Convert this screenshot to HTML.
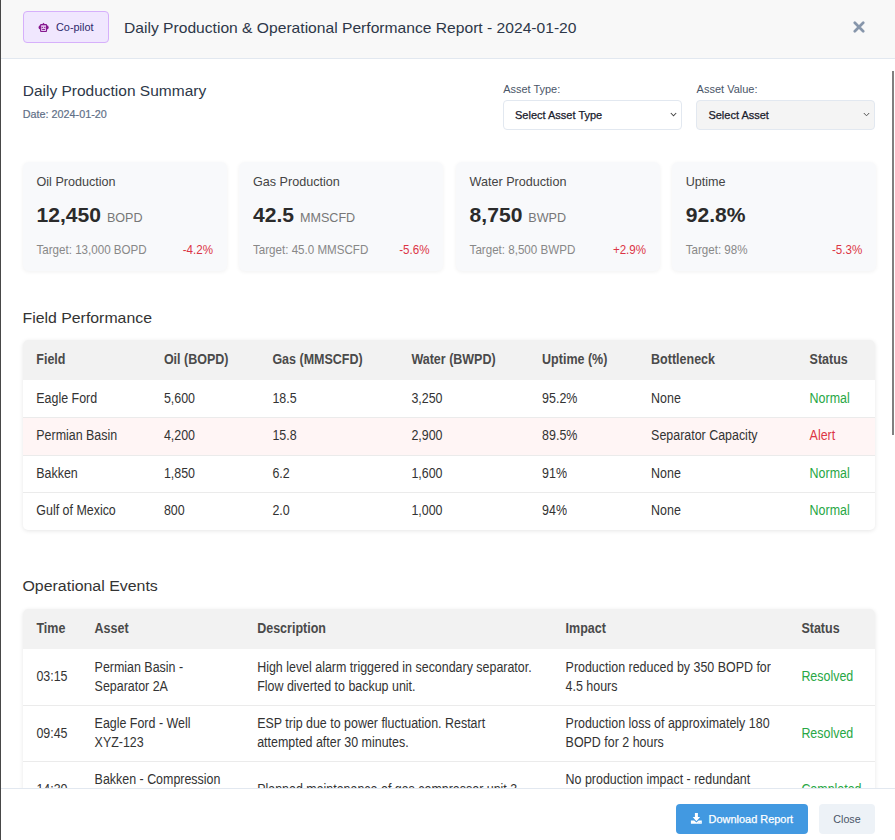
<!DOCTYPE html>
<html><head><meta charset="utf-8"><style>
*{box-sizing:border-box;margin:0;padding:0}
html,body{width:895px;height:840px;overflow:hidden;background:#fff;font-family:"Liberation Sans",sans-serif}
#wrap{position:absolute;left:0;top:0;width:895px;height:840px;background:#fff;overflow:hidden}
.t{position:absolute;white-space:nowrap;line-height:1}
#lb{position:absolute;left:0;top:0;width:1px;height:840px;background:#474747}
#hdr{position:absolute;left:1px;top:0;width:894px;height:59px;background:#f8f8f8;border-bottom:1px solid #e2e8f0}
#copilot{position:absolute;left:23px;top:11px;width:86px;height:32px;background:#f0e7fe;border:1px solid #d6b0fb;border-radius:4px}
.sel{position:absolute;height:29.5px;border:1px solid #e2e8f0;border-radius:4px}
.card{position:absolute;top:162px;width:204px;height:109px;background:#f8f9fb;border-radius:6px;box-shadow:0 1px 4px rgba(0,0,0,0.06)}
.tbl{position:absolute;left:23px;width:852px;background:#fff;border-radius:5px;box-shadow:0 1px 4px rgba(0,0,0,0.10)}
#foot{position:absolute;left:1px;top:788px;width:894px;height:52px;background:#fff;border-top:1px solid #e2e8f0}
#sb{position:absolute;left:892px;top:71px;width:2px;height:364px;background:#808080}
</style></head><body><div id="wrap">
<div id="hdr"></div>
<div id="copilot"></div>
<svg style="position:absolute;left:34px;top:18px" width="20" height="18" viewBox="34 18 20 18"><path d="M40.4 27.4a1.9 1.9 0 0 0 0 0M40.6 25.3a2.1 2.1 0 0 0 0 4.2z" fill="#86198f"/><path d="M46.6 25.3a2.1 2.1 0 0 1 0 4.2z" fill="#86198f"/><path d="M41.9 24.6L43.5 22.8L45.1 24.6z" fill="#86198f"/><rect x="40.6" y="24.6" width="5.9" height="6.9" rx="0.5" fill="#e2c6ee" stroke="#86198f" stroke-width="1.1"/><circle cx="42.3" cy="27.4" r="0.6" fill="#86198f"/><circle cx="44.8" cy="27.4" r="0.6" fill="#86198f"/><rect x="42.1" y="29.1" width="2.9" height="0.9" fill="#86198f"/></svg>
<div class="t" style="left:56.00px;top:21.77px;font-size:10.9px;color:#2e2a6b;">Co-pilot</div>

<div class="t" style="left:124.00px;top:19.76px;font-size:15.64px;color:#2d3748;transform:scaleY(0.96);transform-origin:0 13.24px;">Daily Production &amp; Operational Performance Report - 2024-01-20</div>

<svg style="position:absolute;left:853px;top:21px" width="12" height="12" viewBox="0 0 12 12"><path d="M1.8 1.8L10.2 10.2M10.2 1.8L1.8 10.2" stroke="#8796ab" stroke-width="2.7" stroke-linecap="round"/></svg>
<div class="t" style="left:22.70px;top:82.98px;font-size:15.5px;color:#2d3748;transform:scaleY(0.96);transform-origin:0 13.12px;">Daily Production Summary</div>

<div class="t" style="left:22.80px;top:108.86px;font-size:10.8px;color:#5f6f87;-webkit-text-stroke:0.2px #5f6f87;">Date: 2024-01-20</div>

<div class="t" style="left:503.30px;top:83.93px;font-size:10.95px;color:#4a5568;">Asset Type:</div>

<div class="sel" style="left:503px;top:100px;width:179px;background:#fff"></div>
<div class="t" style="left:515.00px;top:109.99px;font-size:11.0px;color:#1a202c;-webkit-text-stroke:0.25px #1a202c;">Select Asset Type</div>

<svg style="position:absolute;left:669.5px;top:112px" width="7" height="5" viewBox="0 0 7 5"><path d="M0.8 1L3.5 3.8L6.2 1" stroke="#444" stroke-width="1.05" fill="none"/></svg>
<div class="t" style="left:696.60px;top:83.89px;font-size:11.0px;color:#4a5568;">Asset Value:</div>

<div class="sel" style="left:696px;top:100px;width:179px;background:#f4f4f4"></div>
<div class="t" style="left:708.40px;top:109.99px;font-size:11.0px;color:#1a202c;-webkit-text-stroke:0.25px #1a202c;">Select Asset</div>

<svg style="position:absolute;left:862.5px;top:112px" width="7" height="5" viewBox="0 0 7 5"><path d="M0.8 1L3.5 3.8L6.2 1" stroke="#555" stroke-width="1.0" fill="none"/></svg>
<div class="card" style="left:22.5px"></div>
<div class="t" style="left:36.50px;top:176.33px;font-size:12.6px;color:#444;transform:scaleY(0.96);transform-origin:0 10.67px;">Oil Production</div>

<div class="t" style="left:36.50px;top:204.04px;font-size:21.1px;color:#2b2b2b;font-weight:bold;">12,450 <span style="font-size:12.6px;font-weight:normal;color:#777">BOPD</span></div>

<div class="t" style="left:36.50px;top:244.28px;font-size:11.6px;color:#888;transform:scaleY(1.15);transform-origin:0 9.82px;">Target: 13,000 BOPD</div>

<div class="t" style="right:682.00px;top:244.28px;font-size:11.6px;color:#dc3545;transform:scaleY(1.15);transform-origin:0 9.82px">-4.2%</div>
<div class="card" style="left:239.0px"></div>
<div class="t" style="left:253.00px;top:176.33px;font-size:12.6px;color:#444;transform:scaleY(0.96);transform-origin:0 10.67px;">Gas Production</div>

<div class="t" style="left:253.00px;top:204.04px;font-size:21.1px;color:#2b2b2b;font-weight:bold;">42.5 <span style="font-size:12.6px;font-weight:normal;color:#777">MMSCFD</span></div>

<div class="t" style="left:253.00px;top:244.28px;font-size:11.6px;color:#888;transform:scaleY(1.15);transform-origin:0 9.82px;">Target: 45.0 MMSCFD</div>

<div class="t" style="right:465.50px;top:244.28px;font-size:11.6px;color:#dc3545;transform:scaleY(1.15);transform-origin:0 9.82px">-5.6%</div>
<div class="card" style="left:455.6px"></div>
<div class="t" style="left:469.60px;top:176.33px;font-size:12.6px;color:#444;transform:scaleY(0.96);transform-origin:0 10.67px;">Water Production</div>

<div class="t" style="left:469.60px;top:204.04px;font-size:21.1px;color:#2b2b2b;font-weight:bold;">8,750 <span style="font-size:12.6px;font-weight:normal;color:#777">BWPD</span></div>

<div class="t" style="left:469.60px;top:244.28px;font-size:11.6px;color:#888;transform:scaleY(1.15);transform-origin:0 9.82px;">Target: 8,500 BWPD</div>

<div class="t" style="right:248.90px;top:244.28px;font-size:11.6px;color:#dc3545;transform:scaleY(1.15);transform-origin:0 9.82px">+2.9%</div>
<div class="card" style="left:671.7px"></div>
<div class="t" style="left:685.70px;top:176.33px;font-size:12.6px;color:#444;transform:scaleY(0.96);transform-origin:0 10.67px;">Uptime</div>

<div class="t" style="left:685.70px;top:204.04px;font-size:21.1px;color:#2b2b2b;font-weight:bold;">92.8%</div>

<div class="t" style="left:685.70px;top:244.28px;font-size:11.6px;color:#888;transform:scaleY(1.15);transform-origin:0 9.82px;">Target: 98%</div>

<div class="t" style="right:32.80px;top:244.28px;font-size:11.6px;color:#dc3545;transform:scaleY(1.15);transform-origin:0 9.82px">-5.3%</div>
<div class="t" style="left:22.50px;top:310.08px;font-size:15.85px;color:#333;transform:scaleY(0.96);transform-origin:0 13.42px;">Field Performance</div>

<div class="tbl" style="top:340px;height:190px"></div>
<div style="position:absolute;left:23px;top:340px;width:852px;height:40px;background:#f2f2f2;border-radius:5px 5px 0 0"></div>
<div style="position:absolute;left:23px;top:416.9px;width:852px;height:1px;background:#ebebeb"></div>
<div style="position:absolute;left:23px;top:454.7px;width:852px;height:1px;background:#ebebeb"></div>
<div style="position:absolute;left:23px;top:491.9px;width:852px;height:1px;background:#ebebeb"></div>
<div style="position:absolute;left:23px;top:417.9px;width:852px;height:36.80000000000001px;background:#fff5f5"></div>
<div class="t" style="left:36.30px;top:354.22px;font-size:12.5px;color:#4a4a4a;font-weight:bold;transform:scaleY(1.15);transform-origin:0 10.58px;">Field</div>

<div class="t" style="left:163.90px;top:354.22px;font-size:12.5px;color:#4a4a4a;font-weight:bold;transform:scaleY(1.15);transform-origin:0 10.58px;">Oil (BOPD)</div>

<div class="t" style="left:272.40px;top:354.22px;font-size:12.5px;color:#4a4a4a;font-weight:bold;transform:scaleY(1.15);transform-origin:0 10.58px;">Gas (MMSCFD)</div>

<div class="t" style="left:411.40px;top:354.22px;font-size:12.5px;color:#4a4a4a;font-weight:bold;transform:scaleY(1.15);transform-origin:0 10.58px;">Water (BWPD)</div>

<div class="t" style="left:542.10px;top:354.22px;font-size:12.5px;color:#4a4a4a;font-weight:bold;transform:scaleY(1.15);transform-origin:0 10.58px;">Uptime (%)</div>

<div class="t" style="left:651.10px;top:354.22px;font-size:12.5px;color:#4a4a4a;font-weight:bold;transform:scaleY(1.15);transform-origin:0 10.58px;">Bottleneck</div>

<div class="t" style="left:809.60px;top:354.22px;font-size:12.5px;color:#4a4a4a;font-weight:bold;transform:scaleY(1.15);transform-origin:0 10.58px;">Status</div>

<div class="t" style="left:36.30px;top:392.76px;font-size:12.45px;color:#333;transform:scaleY(1.15);transform-origin:0 10.54px;">Eagle Ford</div>

<div class="t" style="left:163.90px;top:392.76px;font-size:12.45px;color:#333;transform:scaleY(1.15);transform-origin:0 10.54px;">5,600</div>

<div class="t" style="left:272.40px;top:392.76px;font-size:12.45px;color:#333;transform:scaleY(1.15);transform-origin:0 10.54px;">18.5</div>

<div class="t" style="left:411.40px;top:392.76px;font-size:12.45px;color:#333;transform:scaleY(1.15);transform-origin:0 10.54px;">3,250</div>

<div class="t" style="left:542.10px;top:392.76px;font-size:12.45px;color:#333;transform:scaleY(1.15);transform-origin:0 10.54px;">95.2%</div>

<div class="t" style="left:651.10px;top:392.76px;font-size:12.45px;color:#333;transform:scaleY(1.15);transform-origin:0 10.54px;">None</div>

<div class="t" style="left:809.60px;top:392.76px;font-size:12.45px;color:#28a745;transform:scaleY(1.15);transform-origin:0 10.54px;">Normal</div>

<div class="t" style="left:36.30px;top:430.36px;font-size:12.45px;color:#333;transform:scaleY(1.15);transform-origin:0 10.54px;">Permian Basin</div>

<div class="t" style="left:163.90px;top:430.36px;font-size:12.45px;color:#333;transform:scaleY(1.15);transform-origin:0 10.54px;">4,200</div>

<div class="t" style="left:272.40px;top:430.36px;font-size:12.45px;color:#333;transform:scaleY(1.15);transform-origin:0 10.54px;">15.8</div>

<div class="t" style="left:411.40px;top:430.36px;font-size:12.45px;color:#333;transform:scaleY(1.15);transform-origin:0 10.54px;">2,900</div>

<div class="t" style="left:542.10px;top:430.36px;font-size:12.45px;color:#333;transform:scaleY(1.15);transform-origin:0 10.54px;">89.5%</div>

<div class="t" style="left:651.10px;top:430.36px;font-size:12.45px;color:#333;transform:scaleY(1.15);transform-origin:0 10.54px;">Separator Capacity</div>

<div class="t" style="left:809.60px;top:430.36px;font-size:12.45px;color:#dc3545;transform:scaleY(1.15);transform-origin:0 10.54px;">Alert</div>

<div class="t" style="left:36.30px;top:467.86px;font-size:12.45px;color:#333;transform:scaleY(1.15);transform-origin:0 10.54px;">Bakken</div>

<div class="t" style="left:163.90px;top:467.86px;font-size:12.45px;color:#333;transform:scaleY(1.15);transform-origin:0 10.54px;">1,850</div>

<div class="t" style="left:272.40px;top:467.86px;font-size:12.45px;color:#333;transform:scaleY(1.15);transform-origin:0 10.54px;">6.2</div>

<div class="t" style="left:411.40px;top:467.86px;font-size:12.45px;color:#333;transform:scaleY(1.15);transform-origin:0 10.54px;">1,600</div>

<div class="t" style="left:542.10px;top:467.86px;font-size:12.45px;color:#333;transform:scaleY(1.15);transform-origin:0 10.54px;">91%</div>

<div class="t" style="left:651.10px;top:467.86px;font-size:12.45px;color:#333;transform:scaleY(1.15);transform-origin:0 10.54px;">None</div>

<div class="t" style="left:809.60px;top:467.86px;font-size:12.45px;color:#28a745;transform:scaleY(1.15);transform-origin:0 10.54px;">Normal</div>

<div class="t" style="left:36.30px;top:505.36px;font-size:12.45px;color:#333;transform:scaleY(1.15);transform-origin:0 10.54px;">Gulf of Mexico</div>

<div class="t" style="left:163.90px;top:505.36px;font-size:12.45px;color:#333;transform:scaleY(1.15);transform-origin:0 10.54px;">800</div>

<div class="t" style="left:272.40px;top:505.36px;font-size:12.45px;color:#333;transform:scaleY(1.15);transform-origin:0 10.54px;">2.0</div>

<div class="t" style="left:411.40px;top:505.36px;font-size:12.45px;color:#333;transform:scaleY(1.15);transform-origin:0 10.54px;">1,000</div>

<div class="t" style="left:542.10px;top:505.36px;font-size:12.45px;color:#333;transform:scaleY(1.15);transform-origin:0 10.54px;">94%</div>

<div class="t" style="left:651.10px;top:505.36px;font-size:12.45px;color:#333;transform:scaleY(1.15);transform-origin:0 10.54px;">None</div>

<div class="t" style="left:809.60px;top:505.36px;font-size:12.45px;color:#28a745;transform:scaleY(1.15);transform-origin:0 10.54px;">Normal</div>

<div class="t" style="left:22.50px;top:578.32px;font-size:15.92px;color:#333;transform:scaleY(0.96);transform-origin:0 13.48px;">Operational Events</div>

<div class="tbl" style="top:609px;height:300px"></div>
<div style="position:absolute;left:23px;top:609px;width:852px;height:40px;background:#f2f2f2;border-radius:5px 5px 0 0"></div>
<div class="t" style="left:36.40px;top:623.22px;font-size:12.5px;color:#4a4a4a;font-weight:bold;transform:scaleY(1.15);transform-origin:0 10.58px;">Time</div>

<div class="t" style="left:94.60px;top:623.22px;font-size:12.5px;color:#4a4a4a;font-weight:bold;transform:scaleY(1.15);transform-origin:0 10.58px;">Asset</div>

<div class="t" style="left:257.20px;top:623.22px;font-size:12.5px;color:#4a4a4a;font-weight:bold;transform:scaleY(1.15);transform-origin:0 10.58px;">Description</div>

<div class="t" style="left:565.60px;top:623.22px;font-size:12.5px;color:#4a4a4a;font-weight:bold;transform:scaleY(1.15);transform-origin:0 10.58px;">Impact</div>

<div class="t" style="left:801.40px;top:623.22px;font-size:12.5px;color:#4a4a4a;font-weight:bold;transform:scaleY(1.15);transform-origin:0 10.58px;">Status</div>

<div style="position:absolute;left:23px;top:705.0px;width:852px;height:1px;background:#ebebeb"></div>
<div style="position:absolute;left:23px;top:761.0px;width:852px;height:1px;background:#ebebeb"></div>
<div class="t" style="left:36.40px;top:671.31px;font-size:12.45px;color:#333;transform:scaleY(1.15);transform-origin:0 10.54px;">03:15</div>

<div class="t" style="left:94.60px;top:661.91px;font-size:12.45px;color:#333;transform:scaleY(1.15);transform-origin:0 10.54px;">Permian Basin -</div>

<div class="t" style="left:94.60px;top:680.71px;font-size:12.45px;color:#333;transform:scaleY(1.15);transform-origin:0 10.54px;">Separator 2A</div>

<div class="t" style="left:257.20px;top:661.91px;font-size:12.45px;color:#333;transform:scaleY(1.15);transform-origin:0 10.54px;">High level alarm triggered in secondary separator.</div>

<div class="t" style="left:257.20px;top:680.71px;font-size:12.45px;color:#333;transform:scaleY(1.15);transform-origin:0 10.54px;">Flow diverted to backup unit.</div>

<div class="t" style="left:565.60px;top:661.91px;font-size:12.45px;color:#333;transform:scaleY(1.15);transform-origin:0 10.54px;">Production reduced by 350 BOPD for</div>

<div class="t" style="left:565.60px;top:680.71px;font-size:12.45px;color:#333;transform:scaleY(1.15);transform-origin:0 10.54px;">4.5 hours</div>

<div class="t" style="left:801.40px;top:671.31px;font-size:12.45px;color:#28a745;transform:scaleY(1.15);transform-origin:0 10.54px;">Resolved</div>

<div class="t" style="left:36.40px;top:727.56px;font-size:12.45px;color:#333;transform:scaleY(1.15);transform-origin:0 10.54px;">09:45</div>

<div class="t" style="left:94.60px;top:718.16px;font-size:12.45px;color:#333;transform:scaleY(1.15);transform-origin:0 10.54px;">Eagle Ford - Well</div>

<div class="t" style="left:94.60px;top:736.96px;font-size:12.45px;color:#333;transform:scaleY(1.15);transform-origin:0 10.54px;">XYZ-123</div>

<div class="t" style="left:257.20px;top:718.16px;font-size:12.45px;color:#333;transform:scaleY(1.15);transform-origin:0 10.54px;">ESP trip due to power fluctuation. Restart</div>

<div class="t" style="left:257.20px;top:736.96px;font-size:12.45px;color:#333;transform:scaleY(1.15);transform-origin:0 10.54px;">attempted after 30 minutes.</div>

<div class="t" style="left:565.60px;top:718.16px;font-size:12.45px;color:#333;transform:scaleY(1.15);transform-origin:0 10.54px;">Production loss of approximately 180</div>

<div class="t" style="left:565.60px;top:736.96px;font-size:12.45px;color:#333;transform:scaleY(1.15);transform-origin:0 10.54px;">BOPD for 2 hours</div>

<div class="t" style="left:801.40px;top:727.56px;font-size:12.45px;color:#28a745;transform:scaleY(1.15);transform-origin:0 10.54px;">Resolved</div>

<div class="t" style="left:36.40px;top:783.81px;font-size:12.45px;color:#333;transform:scaleY(1.15);transform-origin:0 10.54px;">14:30</div>

<div class="t" style="left:94.60px;top:774.41px;font-size:12.45px;color:#333;transform:scaleY(1.15);transform-origin:0 10.54px;">Bakken - Compression</div>

<div class="t" style="left:94.60px;top:793.21px;font-size:12.45px;color:#333;transform:scaleY(1.15);transform-origin:0 10.54px;">Station</div>

<div class="t" style="left:257.20px;top:783.81px;font-size:12.45px;color:#333;transform:scaleY(1.15);transform-origin:0 10.54px;">Planned maintenance of gas compressor unit 3</div>

<div class="t" style="left:565.60px;top:774.41px;font-size:12.45px;color:#333;transform:scaleY(1.15);transform-origin:0 10.54px;">No production impact - redundant</div>

<div class="t" style="left:565.60px;top:793.21px;font-size:12.45px;color:#333;transform:scaleY(1.15);transform-origin:0 10.54px;">capacity available</div>

<div class="t" style="left:801.40px;top:783.81px;font-size:12.45px;color:#28a745;transform:scaleY(1.15);transform-origin:0 10.54px;">Completed</div>

<div id="foot"></div>
<div style="position:absolute;left:676px;top:804px;width:132px;height:30px;background:#4299e1;border-radius:4px"></div>
<svg style="position:absolute;left:686px;top:808px" width="20" height="20" viewBox="686 808 20 20"><path d="M694.9 812.9H697.9V817H700.1L696.4 821.2L692.7 817H694.9Z" fill="#fff"/><path d="M690.9 820.4H694.2L696.4 822.5L698.6 820.4H701.8V823.8H690.9Z" fill="#fff"/><circle cx="698.9" cy="822.3" r="0.4" fill="#8cc0ee"/><circle cx="700.4" cy="822.3" r="0.4" fill="#8cc0ee"/></svg>
<div class="t" style="left:708.60px;top:814.13px;font-size:10.95px;color:#fff;-webkit-text-stroke:0.25px #fff;">Download Report</div>

<div style="position:absolute;left:819px;top:804px;width:56px;height:30px;background:#edf2f7;border-radius:4px"></div>
<div class="t" style="left:833.30px;top:814.34px;font-size:10.7px;color:#4a5568;">Close</div>

<div id="sb"></div>
<div id="lb"></div>
</div></body></html>
